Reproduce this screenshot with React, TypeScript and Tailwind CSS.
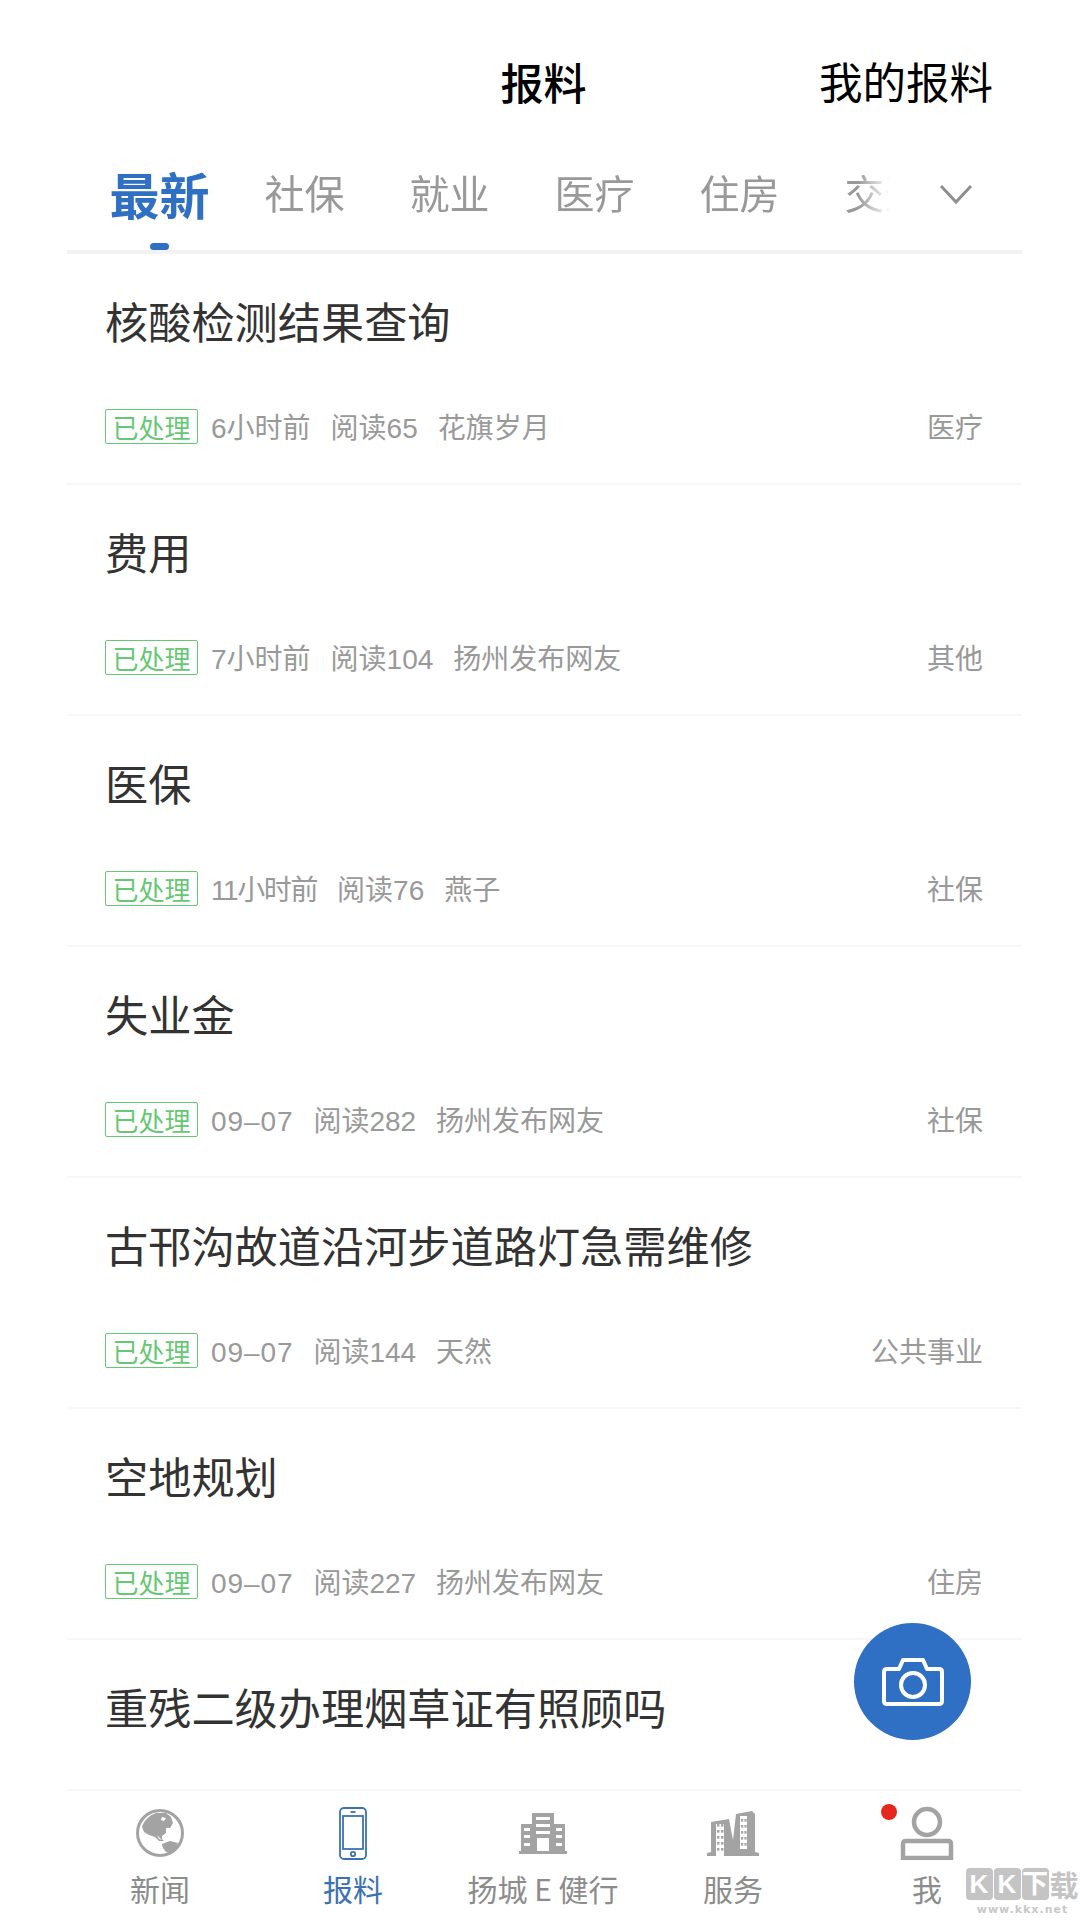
const FONT = "font-['Noto_Sans_CJK_SC','Noto_Sans',sans-serif]";

const tabs = ['最新', '社保', '就业', '医疗', '住房', '交通'];

const reports = [
  { title: '核酸检测结果查询', time: '6小时前', timeClass: '', reads: '阅读65', user: '花旗岁月', tag: '医疗' },
  { title: '费用', time: '7小时前', timeClass: '', reads: '阅读104', user: '扬州发布网友', tag: '其他' },
  { title: '医保', time: '11小时前', timeClass: 'tracking-[-1.4px]', reads: '阅读76', user: '燕子', tag: '社保' },
  { title: '失业金', time: '09–07', timeClass: 'tracking-[0.9px]', reads: '阅读282', user: '扬州发布网友', tag: '社保' },
  { title: '古邗沟故道沿河步道路灯急需维修', time: '09–07', timeClass: 'tracking-[0.9px]', reads: '阅读144', user: '天然', tag: '公共事业' },
  { title: '空地规划', time: '09–07', timeClass: 'tracking-[0.9px]', reads: '阅读227', user: '扬州发布网友', tag: '住房' },
  { title: '重残二级办理烟草证有照顾吗', time: '', timeClass: '', reads: '', user: '', tag: '' },
];

function GlobeIcon() {
  return (
    <svg width="50" height="50" viewBox="0 0 50 50" fill="none">
      <circle cx="25" cy="25" r="22.5" stroke="#a3a3a3" strokeWidth="3" />
      <path
        d="M7 19 C9 12 15 7 21 5 L31 5 L36 9 L38 15 L35 20 L31 20 L31 25 L27 28 L27 31 L29 33 L24 33 L20 29 L14 27 L9 24 Z"
        fill="#a3a3a3"
      />
      <path d="M27 36 L35 33 L43 35 L41 41 L35 45 L31 44 L28 40 Z" fill="#a3a3a3" />
      <path d="M27 9 L31 10 L29 13 L26 12 Z M22 27 L27 32 L24 31 Z" fill="#fff" />
    </svg>
  );
}

function PhoneIcon() {
  return (
    <svg width="28" height="53" viewBox="0 0 28 53" fill="none" stroke="#3b72b5" strokeWidth="1.8">
      <rect x="1" y="1" width="26" height="51" rx="4" />
      <rect x="4" y="9" width="20" height="33" />
      <path d="M11.5 5 H16.5" />
      <circle cx="14" cy="47" r="2.2" />
    </svg>
  );
}

function BuildingIcon() {
  return (
    <svg width="48" height="42" viewBox="0 0 48 42">
      <path fill="#a3a3a3" d="M13 1 H35 V12 H46 V39 H48 V42 H0 V39 H2 V12 H13 Z" />
      <g fill="#fff">
        <rect x="17" y="5" width="14" height="3" />
        <rect x="17" y="12" width="14" height="3" />
        <rect x="17" y="19" width="14" height="3" />
        <rect x="18" y="26" width="12" height="13" />
        <rect x="5" y="16" width="6" height="3" />
        <rect x="5" y="23" width="6" height="3" />
        <rect x="5" y="31" width="6" height="3" />
        <rect x="37" y="16" width="6" height="3" />
        <rect x="37" y="23" width="6" height="3" />
        <rect x="37" y="31" width="6" height="3" />
      </g>
    </svg>
  );
}

function ServiceIcon() {
  const left = [14, 20, 26, 32, 38];
  const right = [9, 15, 21, 27, 33];
  return (
    <svg width="52" height="46" viewBox="0 0 52 46">
      <path
        fill="#a3a3a3"
        d="M4 12 L22 9 L26 30 L29 4 L45 1 L48 4 V42 L52 43 V46 H0 V43 L4 42 Z"
      />
      <rect x="9" y="14" width="8" height="32" fill="#fff" />
      <rect x="33" y="6" width="7" height="33" fill="#fff" />
      <g fill="#a3a3a3">
        {left.map(y => (
          <g key={y}>
            <rect x="10" y={y} width="2.4" height="2.6" />
            <rect x="14" y={y} width="2.4" height="2.6" />
          </g>
        ))}
        {right.map(y => (
          <g key={y}>
            <rect x="34" y={y} width="2.2" height="2.6" />
            <rect x="37.4" y={y} width="2.2" height="2.6" />
          </g>
        ))}
      </g>
    </svg>
  );
}

function PersonIcon() {
  return (
    <svg width="54" height="54" viewBox="0 0 54 54" fill="none" stroke="#a3a3a3">
      <circle cx="27" cy="16" r="13" strokeWidth="4.5" />
      <path d="M3 52 V38 Q3 35 6 35 H48 Q51 35 51 38 V52 H3 Z" strokeWidth="4.5" />
    </svg>
  );
}

function CameraIcon() {
  return (
    <svg width="62" height="49" viewBox="0 0 62 49" fill="none" stroke="#fff" strokeWidth="4" strokeLinejoin="round">
      <path d="M5 12 H17 L21 3 H41 L45 12 H57 Q60 12 60 15 V44 Q60 47 57 47 H5 Q2 47 2 44 V15 Q2 12 5 12 Z" />
      <circle cx="31" cy="28" r="12" />
    </svg>
  );
}

const navItems = [
  { label: '新闻', icon: <GlobeIcon />, width: 'w-[208px]' },
  { label: '报料', icon: <PhoneIcon />, active: true, width: 'w-[178px]' },
  { label: '扬城 E 健行', icon: <BuildingIcon />, width: 'w-[202px]' },
  { label: '服务', icon: <ServiceIcon />, width: 'w-[178px]' },
  { label: '我', icon: <PersonIcon />, badge: true, width: 'w-[210px]' },
];

const watermark = ['K', 'K', '下'];

function ReportRow({ title, time, timeClass, reads, user, tag }: (typeof reports)[number]) {
  return (
    <div className="h-[231px] shrink-0 border-b-2 border-[#f7f7f7] pl-[38px] pr-[39px] pt-[31px]">
      <div className="text-[43.2px] leading-[70px] text-[#333333]">{title}</div>
      {tag && (
        <div className="mt-[51px] flex items-center font-['Liberation_Sans','Noto_Sans_CJK_SC',sans-serif] text-[28px] leading-[36px] text-[#999999]">
          <span className="mr-[13px] flex h-[35px] w-[93px] items-center justify-center rounded-[2px] border border-[#66c873] font-['Noto_Sans_CJK_SC',sans-serif] text-[26px] text-[#66c873]">
            已处理
          </span>
          <span className={`mr-[20px] pt-[5px] ${timeClass}`}>{time}</span>
          <span className="mr-[20px] pt-[5px]">{reads}</span>
          <span className="pt-[5px]">{user}</span>
          <span className="ml-auto pt-[5px]">{tag}</span>
        </div>
      )}
    </div>
  );
}

export default function App() {
  return (
    <div className={`${FONT} relative flex h-[1920px] w-[1080px] flex-col overflow-hidden bg-white`}>
      <header className="relative flex h-[140px] shrink-0 items-start justify-center pl-[7px] pt-[51px]">
        <h1 className="text-[43px] font-medium leading-[60px] text-black">报料</h1>
        <span className="absolute right-[87px] top-[51px] text-[43.5px] leading-[60px] text-black">我的报料</span>
      </header>

      <div className="ml-[67px] mr-[58px] flex h-[114px] shrink-0 items-start border-b-4 border-[#f2f2f2]">
        <div className="ml-[20px] flex h-[110px] w-[803px] overflow-hidden [mask-image:linear-gradient(to_right,black_96%,transparent_100%)]">
          {tabs.map((tab, i) => (
            <div key={tab} className="relative flex h-full w-[145px] shrink-0 justify-center">
              {i === 0 ? (
                <>
                  <span className="pt-[18px] text-[50px] font-bold leading-[70px] text-[#2f6fc4]">{tab}</span>
                  <span className="absolute bottom-[0px] left-[63px] h-[7px] w-[19px] rounded-full bg-[#2f6fc4]" />
                </>
              ) : (
                <span className="pt-[21px] text-[40px] leading-[62px] text-[#999999]">{tab}</span>
              )}
            </div>
          ))}
        </div>
        <svg className="ml-[49px] mt-[44px]" width="34" height="22" viewBox="0 0 34 22" fill="none" stroke="#8f8f8f" strokeWidth="3">
          <path d="M2 2 L17 18 L32 2" />
        </svg>
      </div>

      <main className="ml-[67px] mr-[58px] flex min-h-0 flex-1 flex-col overflow-hidden">
        {reports.map(r => (
          <ReportRow key={r.title} {...r} />
        ))}
      </main>

      <div className="ml-[67px] mr-[58px] h-[2px] shrink-0 bg-[#f7f7f7]" />

      <nav className="flex h-[129px] shrink-0 bg-white pl-[56px]">
        {navItems.map(item => (
          <div key={item.label} className={`${item.width} relative flex shrink-0 flex-col items-center pt-[14px]`}>
            <div className="flex h-[56px] items-center">{item.icon}</div>
            <span className={`mt-[9px] text-[30px] leading-[36px] ${item.active ? 'text-[#3b72b5]' : 'text-[#8c8c8c]'}`}>
              {item.label}
            </span>
            {item.badge && <span className="absolute left-[59px] top-[13px] h-[16px] w-[16px] rounded-full bg-[#e5281e]" />}
          </div>
        ))}
      </nav>

      <button className="absolute left-[854px] top-[1623px] flex h-[117px] w-[117px] items-center justify-center rounded-full bg-[#2f6fc4]">
        <CameraIcon />
      </button>

      <div className="absolute left-[965px] top-[1868px] flex w-[115px] flex-col items-center">
        <div className="flex items-center gap-[1px]">
          {watermark.map((c, i) => (
            <span key={i} className="flex h-[32px] w-[27px] items-center justify-center rounded-[4px] bg-[#c4c4c4] font-['Liberation_Sans','Noto_Sans_CJK_SC',sans-serif] text-[26px] font-bold leading-none text-white">
              {c}
            </span>
          ))}
          <span className="w-[30px] text-[29px] font-bold leading-[32px] text-[#c4c4c4]">载</span>
        </div>
        <span className="mt-[3px] font-['DejaVu_Sans',sans-serif] text-[11px] font-bold leading-[14px] tracking-[1px] text-[#c8c8c8]">www.kkx.net</span>
      </div>
    </div>
  );
}
